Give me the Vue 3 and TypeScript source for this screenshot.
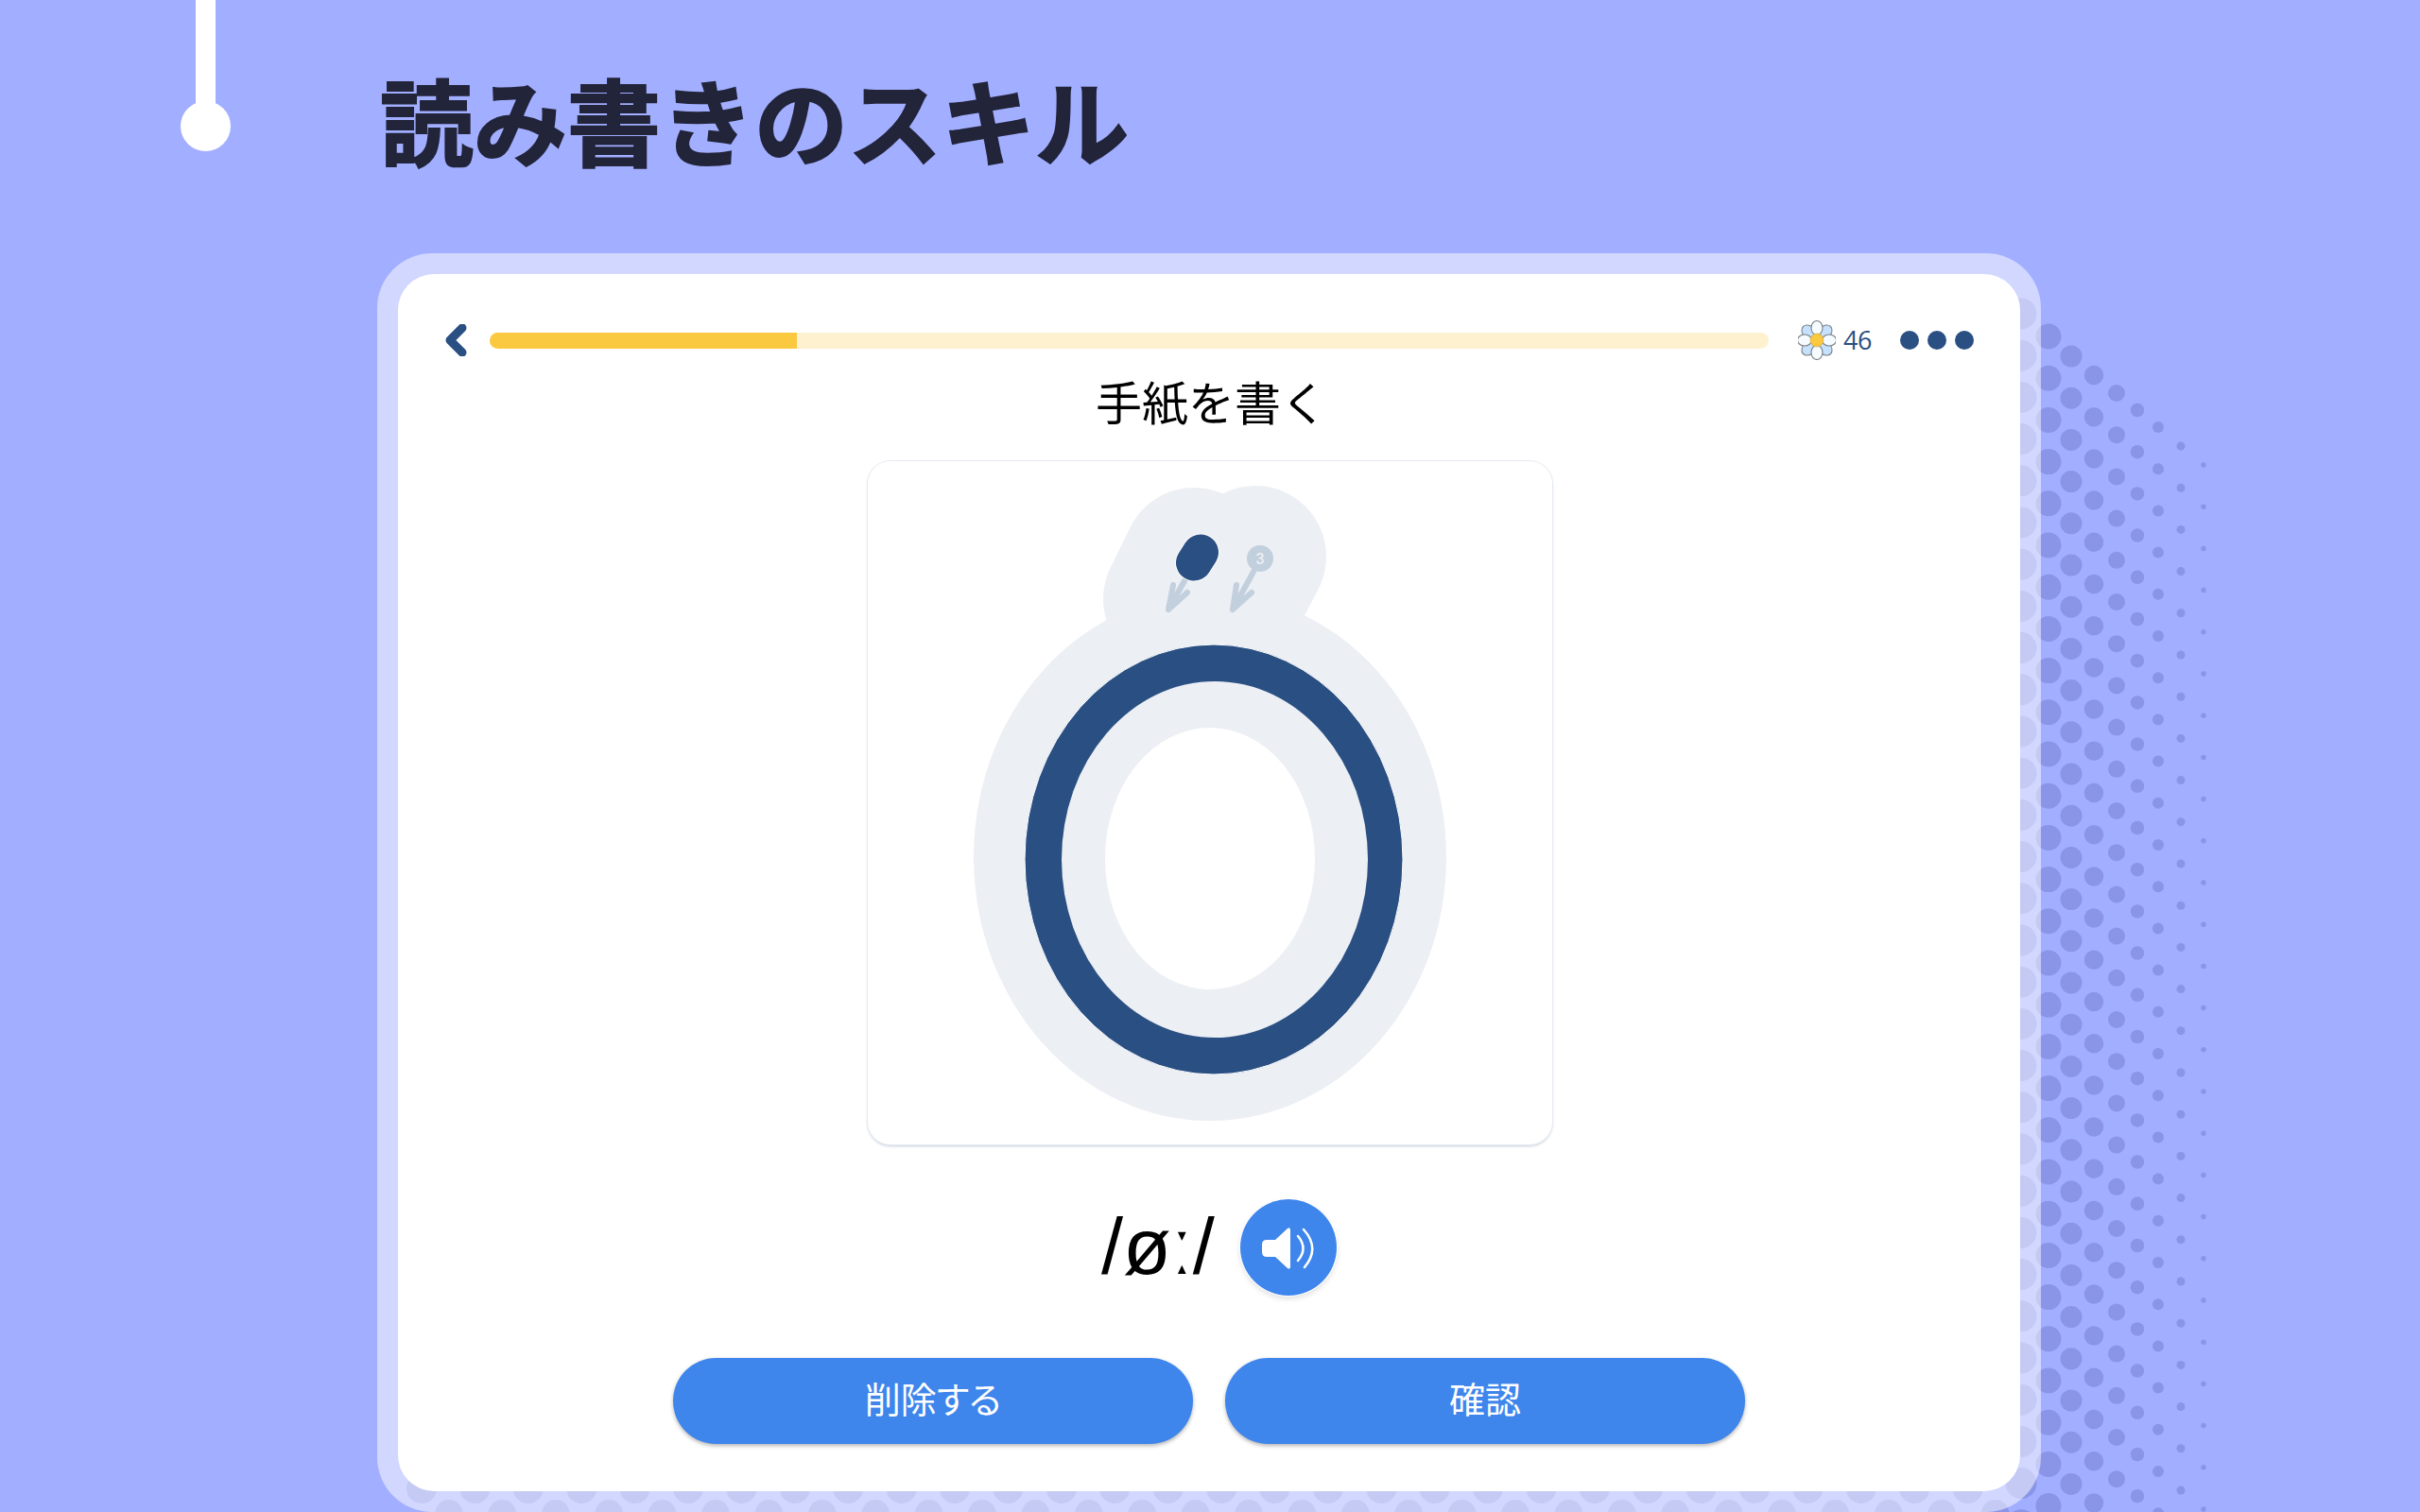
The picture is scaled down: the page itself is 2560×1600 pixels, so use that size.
<template>
  <div class="page">
    <!-- halftone behind the frame -->
    <svg class="halftone" width="2560" height="1600" viewBox="0 0 2560 1600">
      <circle v-for="(d, i) in dots" :key="i" :cx="d.x" :cy="d.y" :r="d.r" fill="#8b95e8" />
    </svg>

    <div class="thread"><span class="knob"></span></div>

    <header class="head">
      <h1 class="title">読み書きのスキル</h1>
    </header>

    <section class="frame">
      <div class="card">
        <div class="topbar">
          <svg class="back" width="23" height="34" viewBox="0 0 23 34">
            <path d="M18 4 L5 17 L18 30" fill="none" stroke="#2a4f82" stroke-width="9" stroke-linecap="round" stroke-linejoin="round" />
          </svg>
          <div class="track">
            <div class="fill" :style="{ width: progress + '%' }"></div>
          </div>
          <svg class="flower" width="40" height="42" viewBox="-20 -21 40 42">
            <g stroke="#7d8287" stroke-width="1.1">
              <ellipse v-for="a in [45, 135, 225, 315]" :key="a" cx="0" cy="-12" rx="6.5" ry="8.5" fill="#c6e1fd" :transform="`rotate(${a})`" />
              <ellipse v-for="a in [0, 90, 180, 270]" :key="a" cx="0" cy="-13" rx="6" ry="7.5" fill="#f6fbff" :transform="`rotate(${a})`" />
            </g>
            <circle r="7" fill="#fbc93f" stroke="#c9a544" stroke-width="0.6" />
          </svg>
          <span class="count">46</span>
          <div class="more">
            <span></span><span></span><span></span>
          </div>
        </div>

        <h2 class="task">手紙を書く</h2>

        <div class="canvas">
          <svg width="724" height="723" viewBox="918 487 724 723">
            <g fill="none" stroke="#eceff4" stroke-width="150" stroke-linecap="round">
              <path d="M1263 590 L1242 633" />
              <path d="M1328 588 L1290 660" />
            </g>
            <ellipse cx="1280" cy="906" rx="250" ry="279" fill="#eceff4" />
            <ellipse cx="1284" cy="908.5" rx="200" ry="227.5" fill="#2a4f82" stroke="#fff" stroke-width="1" />
            <ellipse cx="1285" cy="908.5" rx="162" ry="188.5" fill="#eceff4" />
            <ellipse cx="1280" cy="907.5" rx="111" ry="138.5" fill="#fff" />
            <!-- arrows -->
            <g fill="none" stroke="#c2cfdd" stroke-width="6" stroke-linecap="round" stroke-linejoin="round">
              <path d="M1254 612 L1236 644 M1241 618 L1236 644 L1256 626" />
              <path d="M1326 604 L1304 644 M1308 618 L1304 644 L1324 626" />
            </g>
            <circle cx="1333" cy="590" r="14" fill="#c2cfdd" />
            <text x="1333" y="596" class="stroke-no" text-anchor="middle">3</text>
            <!-- stroke drawn so far -->
            <path d="M1270 583.5 L1263 594.5" fill="none" stroke="#fff" stroke-width="40" stroke-linecap="round" />
            <path d="M1270 583.5 L1263 594.5" fill="none" stroke="#2a4f82" stroke-width="38" stroke-linecap="round" />
          </svg>
        </div>

        <div class="sound-row">
          <span class="ipa">/øː/</span>
          <button class="speaker" type="button">
            <svg width="62" height="50" viewBox="1332 1294 62 50">
              <path d="M1340 1311 L1349 1311 L1362 1299 Q1365 1297 1365 1301 L1365 1339 Q1365 1343 1362 1341 L1349 1329 L1340 1329 Q1335 1329 1335 1324 L1335 1316 Q1335 1311 1340 1311 Z" fill="#fff" />
              <path d="M1373 1307 Q1384 1320 1373 1333" fill="none" stroke="#fff" stroke-width="2.5" stroke-linecap="round" />
              <path d="M1379 1300 Q1397 1320 1380 1340" fill="none" stroke="#fff" stroke-width="2.5" stroke-linecap="round" />
            </svg>
          </button>
        </div>

        <div class="actions">
          <button class="action" type="button">削除する</button>
          <button class="action" type="button">確認</button>
        </div>
      </div>
    </section>
  </div>
</template>

<script setup lang="ts">
interface Dot {
  x: number
  y: number
  r: number
}

const progress = 24

// columns down the right side: x, first y, diameter
const columns = [
  [2138, 332, 33],
  [2167, 356, 27],
  [2191, 377, 23],
  [2215, 397, 20.5],
  [2239, 416, 18],
  [2261, 434, 14.5],
  [2283, 452, 12],
  [2307, 472, 9],
  [2331, 492, 5.5],
]

const dots: Dot[] = []

for (const [x, y0, d] of columns) {
  for (let y = y0; y < 1620; y += 44.2) {
    dots.push({ x, y, r: d / 2 })
  }
}

// two rows along the bottom of the frame
for (let x = 446; x < 2120; x += 56.4) {
  dots.push({ x, y: 1575, r: 16 })
}
for (let x = 475; x < 2120; x += 56.4) {
  dots.push({ x, y: 1602, r: 15 })
}
</script>

<style scoped>
.page {
  position: relative;
  width: 2560px;
  height: 1600px;
  overflow: hidden;
  background: #a2aeff;
  font-family: "Noto Sans CJK JP", "Noto Sans", sans-serif;
}

.halftone {
  position: absolute;
  left: 0;
  top: 0;
}

.thread {
  position: absolute;
  left: 207px;
  top: 0;
  width: 21px;
  height: 120px;
  background: #fff;
}

.knob {
  position: absolute;
  left: -16px;
  top: 107px;
  width: 53px;
  height: 53px;
  border-radius: 50%;
  background: #fff;
}

.head {
  position: relative;
  height: 268px;
  padding-left: 402px;
  box-sizing: border-box;
}

.title {
  margin: 0;
  padding-top: 61px;
  font-size: 99px;
  line-height: 128px;
  font-weight: 700;
  color: #22243a;
  -webkit-text-stroke: 2px #22243a;
}

.frame {
  position: relative;
  margin-left: 399px;
  width: 1760px;
  height: 1332px;
  box-sizing: border-box;
  padding: 22px;
  border-radius: 58px;
  background: rgba(255, 255, 255, 0.5);
}

.card {
  display: flex;
  flex-direction: column;
  align-items: center;
  height: 100%;
  border-radius: 38px;
  background: #fff;
}

.topbar {
  display: flex;
  align-items: center;
  align-self: stretch;
  height: 34px;
  margin-top: 53px;
  padding: 0 49px 0 50px;
}

.back {
  flex: none;
  margin-right: 24px;
}

.track {
  flex: 1;
  height: 17px;
  border-radius: 9px;
  overflow: hidden;
  background: #fdf1d0;
}

.fill {
  height: 100%;
  background: #fbc93f;
}

.flower {
  flex: none;
  margin-left: 31px;
}

.count {
  margin-left: 8px;
  font-family: "Open Sans", sans-serif;
  font-size: 27px;
  line-height: 34px;
  letter-spacing: -0.5px;
  color: #2a4f82;
}

.more {
  display: flex;
  gap: 9px;
  margin-left: 30px;
}

.more span {
  width: 20px;
  height: 20px;
  border-radius: 50%;
  background: #2a4f82;
}

.task {
  margin: 12px 0 0 5px;
  font-size: 49px;
  line-height: 70px;
  font-weight: 400;
  color: #000;
}

.canvas {
  width: 724px;
  height: 723px;
  margin: 29px 0 0 2px;
  border-radius: 24px;
  overflow: hidden;
  background: #fff;
  box-shadow: 0 0 0 1px #e6ebf1, 0 2px 3px rgba(130, 150, 180, 0.45);
}

.canvas svg {
  display: block;
}

.stroke-no {
  font-family: "Roboto", sans-serif;
  font-size: 16px;
  font-weight: 500;
  fill: #eceff4;
}

.sound-row {
  display: flex;
  align-items: center;
  gap: 27px;
  margin: 58px 0 0 21px;
}

.ipa {
  font-family: "Liberation Sans", sans-serif;
  font-size: 83px;
  line-height: 102px;
  color: #000;
}

.speaker {
  display: flex;
  align-items: center;
  justify-content: center;
  width: 102px;
  height: 102px;
  padding: 0;
  border: none;
  border-radius: 50%;
  background: #3e85ec;
  box-shadow: 0 0 0 1px #fff, 0 3px 6px rgba(0, 0, 0, 0.14);
}

.actions {
  display: flex;
  gap: 34px;
  margin: 66px 0 0;
}

.action {
  width: 550px;
  height: 91px;
  padding: 0 0 8px;
  border: none;
  border-radius: 46px;
  background: #3e85ec;
  color: #fff;
  font-family: inherit;
  font-size: 38px;
  font-weight: 400;
  font-feature-settings: "palt";
  box-shadow: 0 2px 4px rgba(0, 0, 0, 0.3);
}
</style>
